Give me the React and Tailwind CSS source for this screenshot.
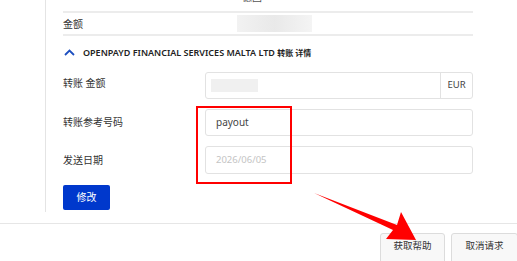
import React from "react";

export default function App() {
  const font = { fontFamily: '"Noto Sans", "Noto Sans CJK SC", sans-serif' };
  return (
    <div className="relative w-[517px] h-[261px] overflow-hidden bg-white text-[#333]" style={font}>
      <div className="ml-[45px] w-[428px] h-[212px] border-l border-[#e4e4e4] pl-[17px] flex flex-col">
        <div className="h-[11px] relative overflow-hidden">
          <div className="absolute left-[179px] -top-[9px] text-[10px] leading-[12px] text-[#555]">德国</div>
        </div>
        <div className="h-[25px] border-t-2 border-b-2 border-[#ececec] flex items-center">
          <span className="w-[174px] text-[10px] leading-none">金额</span>
          <div className="w-[75px] h-[17px] bg-gradient-to-r from-[#f2f2f2] via-[#e9e9e9] to-[#f4f4f4]"></div>
        </div>
        <div className="h-[33px] flex items-center">
          <svg width="11" height="7" viewBox="0 0 11 7" className="ml-[1px] mr-[8px]">
            <path d="M1 6 L5.5 1.5 L10 6" fill="none" stroke="#1d4fc0" strokeWidth="1.8" />
          </svg>
          <span className="text-[9px] font-semibold text-[#222]">
            OPENPAYD FINANCIAL SERVICES MALTA LTD <span className="text-[8px]">转账 详情</span>
          </span>
        </div>
        <div className="mt-[3px] flex flex-col gap-[10px]">
          <div className="flex items-center h-[27px]">
            <span className="w-[142px] text-[10px] -mt-[4px]">转账 金额</span>
            <div className="flex-1 h-full border border-[#e2e2e2] rounded-[3px] flex">
              <div className="flex-1 flex items-center pl-[5px]">
                <div className="w-[47px] h-[13px] bg-[#f0f0f0]"></div>
              </div>
              <div className="w-[32px] border-l border-[#e2e2e2] flex items-center justify-center text-[9.5px] text-[#444]">EUR</div>
            </div>
          </div>
          <div className="flex items-center h-[27px]">
            <span className="w-[142px] text-[10px]">转账参考号码</span>
            <div className="flex-1 h-full border border-[#e2e2e2] rounded-[3px] flex items-center pl-[10px] text-[10px] text-[#444]">payout</div>
          </div>
          <div className="flex items-center h-[28px]">
            <span className="w-[142px] text-[10px]">发送日期</span>
            <div className="flex-1 h-full border border-[#e2e2e2] rounded-[3px] flex items-center pl-[10px] text-[9.5px] text-[#c4c4c4]">2026/06/05</div>
          </div>
        </div>
        <div className="mt-[11px]">
          <button className="w-[47px] h-[25px] bg-[#0038cc] rounded-[2px] text-white text-[10px] flex items-center justify-center">修改</button>
        </div>
      </div>
      <div className="mt-[11px] border-t border-[#e6e6e6] pt-[9px] flex justify-end gap-[6px]">
        <button className="w-[65px] h-[32px] border border-[#dcdcdc] rounded-[3px] bg-[#f8f8f8] text-[9.5px] text-[#333] pb-[6px]">获取帮助</button>
        <button className="w-[67px] h-[32px] border border-[#dcdcdc] rounded-[3px] bg-[#f8f8f8] text-[9.5px] text-[#333] pb-[6px] -mr-[1px]">取消请求</button>
      </div>
      <div className="absolute left-[196px] top-[106px] w-[96px] h-[78px] border-2 border-[#ff0000]"></div>
      <svg className="absolute left-0 top-0" width="517" height="261" viewBox="0 0 517 261">
        <polygon points="314,193 397,225 401,212 416,240 386,239 393,230" fill="#ff0000" />
      </svg>
    </div>
  );
}
